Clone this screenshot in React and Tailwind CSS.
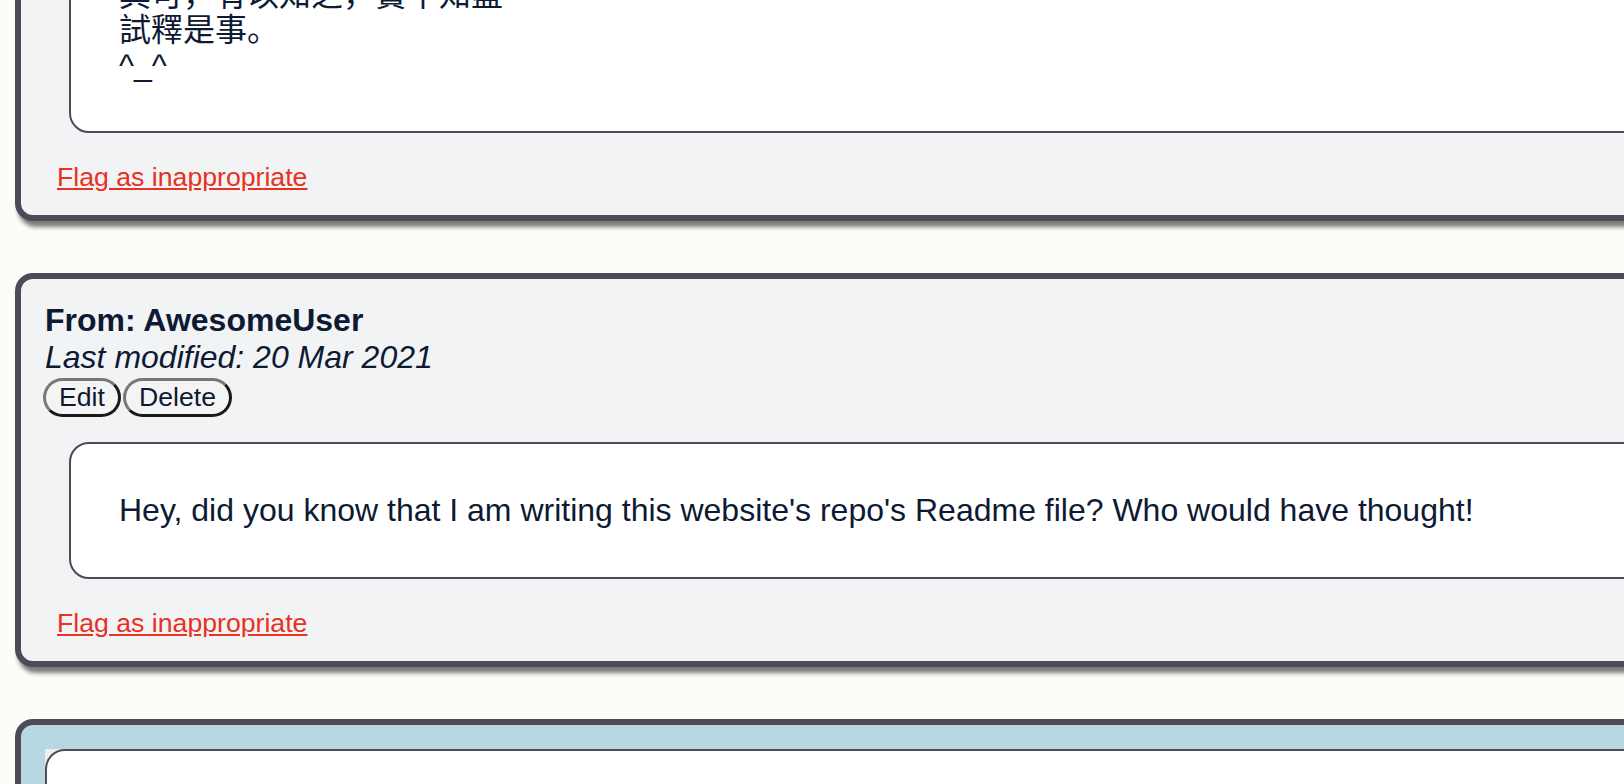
import React from "react";

const comments = [
  {
    id: 1,
    author: "AwesomeUser",
    modified: "20 Mar 2021",
    lines: [
      "子曰：學而時習之，不亦說乎？",
      "有朋自遠方來，不亦樂乎？",
      "其可，有以知之，實不知盡",
      "試釋是事。",
      "^_^",
    ],
  },
  {
    id: 2,
    author: "AwesomeUser",
    modified: "20 Mar 2021",
    lines: [
      "Hey, did you know that I am writing this website's repo's Readme file? Who would have thought!",
    ],
  },
];

function CommentCard({ comment, first }) {
  return (
    <div
      className={`w-[1700px] rounded-[18px] border-[6px] border-[#4f4a57] bg-[#f2f3f5] px-[24px] pt-[23px] pb-[23px] shadow-[3px_6px_4px_#7c7c7c] ${
        first ? "-mt-[311px]" : ""
      }`}
    >
      <div className="font-bold leading-[36.8px]">From: {comment.author}</div>
      <div className="italic leading-[36.8px]">Last modified: {comment.modified}</div>
      <div className="-ml-[2px] mt-[2px] flex gap-[2px]">
        <button className="rounded-full border-[3px] border-t-[#777777] border-l-[#777777] border-r-[#1a1a1a] border-b-[#1a1a1a] bg-[#f4f4f5] px-[13px] py-[2px] text-[26.67px] leading-[29px]">
          Edit
        </button>
        <button className="rounded-full border-[3px] border-t-[#777777] border-l-[#777777] border-r-[#1a1a1a] border-b-[#1a1a1a] bg-[#f4f4f5] px-[13px] py-[2px] text-[26.67px] leading-[29px]">
          Delete
        </button>
      </div>
      <div className="ml-[24px] mt-[25px] rounded-[20px] border-2 border-[#4f4a57] bg-white px-[48px] py-[48px]">
        {comment.lines.map((line, i) => (
          <div key={i} className={comment.lines.length > 1 ? "leading-[35px]" : "leading-[36.8px]"}>
            {line}
          </div>
        ))}
      </div>
      <a
        href="#"
        className="ml-[12px] mt-[29px] block w-fit text-[26.67px] leading-[30.6px] text-[#e8311f] underline"
      >
        Flag as inappropriate
      </a>
    </div>
  );
}

export default function App() {
  return (
    <div
      className="h-[784px] overflow-hidden bg-[#fefcf6] text-[32px] text-[#0e1a33]"
      style={{ fontFamily: '"Liberation Sans", "Noto Sans CJK SC", Arial, sans-serif' }}
    >
      <div className="flex flex-col gap-[52px] pl-[15px]">
        {comments.map((c, i) => (
          <CommentCard key={c.id} comment={c} first={i === 0} />
        ))}

        {/* new comment form */}
        <div className="w-[1700px] rounded-[18px] border-[6px] border-[#4f4a57] bg-[#b5d8e3] p-[24px]">
          <div className="bg-[#eeeeee]">
            <div className="h-[160px] rounded-tl-[20px] border-2 border-[#4f4a57] bg-white"></div>
          </div>
        </div>
      </div>
    </div>
  );
}
